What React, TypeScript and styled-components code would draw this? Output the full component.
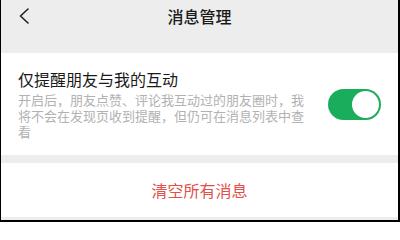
import React from "react";
import styled, { createGlobalStyle } from "styled-components";

const GlobalStyle = createGlobalStyle`
  html, body { margin: 0; padding: 0; background: #ffffff; }
  * { box-sizing: border-box; }
  body { font-family: "Noto Sans CJK SC", "Noto Sans", sans-serif; }
`;

const Frame = styled.div`
  width: 400px;
  height: 222px;
  background: #ededed;
  border-left: 1px solid #000;
  border-right: 2px solid #000;
  border-bottom: 2px solid #000;
  display: flex;
  flex-direction: column;
  overflow: hidden;
`;

const Header = styled.header`
  height: 53px;
  flex: none;
`;

const NavBar = styled.div`
  height: 31px;
  display: grid;
  grid-template-columns: 60px 1fr 60px;
  align-items: center;
`;

const BackButton = styled.div`
  padding-left: 17px;
  display: flex;
  align-items: center;
  padding-top: 1px;
`;

const Title = styled.h1`
  margin: 0;
  text-align: center;
  font-size: 16px;
  font-weight: 500;
  color: #1a1a1a;
  line-height: 22px;
`;

const Section = styled.section<{ $gapAfter?: number }>`
  background: #ffffff;
  margin-bottom: ${(p) => p.$gapAfter ?? 0}px;
`;

const SettingRow = styled.div`
  display: flex;
  align-items: center;
  padding: 16px 17px 15px 17px;
  gap: 20px;
`;

const TextCol = styled.div`
  flex: 1;
  min-width: 0;
`;

const SettingTitle = styled.div`
  font-size: 16px;
  line-height: 20px;
  color: #1a1a1a;
`;

const SettingDesc = styled.div`
  margin-top: 3px;
  font-size: 13px;
  line-height: 16px;
  color: #b2b2b2;
`;

const Toggle = styled.div<{ $on: boolean }>`
  flex: none;
  width: 53px;
  height: 31px;
  border-radius: 16px;
  background: ${(p) => (p.$on ? "#1aad5b" : "#e5e5e5")};
  display: flex;
  align-items: center;
  justify-content: ${(p) => (p.$on ? "flex-end" : "flex-start")};
  padding: 2px;
`;

const Knob = styled.div`
  width: 27px;
  height: 27px;
  border-radius: 50%;
  background: #ffffff;
`;

const ActionRow = styled.div`
  height: 54px;
  display: flex;
  align-items: center;
  justify-content: center;
  font-size: 16px;
  color: #e2504a;
`;

export default function App() {
  return (
    <>
      <GlobalStyle />
      <Frame>
        <Header>
          <NavBar>
            <BackButton>
              <svg width="12" height="16" viewBox="0 0 12 16" fill="none">
                <path d="M10 1 L2.5 8 L10 15" stroke="#222" strokeWidth="1.6" strokeLinecap="round" strokeLinejoin="round" />
              </svg>
            </BackButton>
            <Title>消息管理</Title>
            <div />
          </NavBar>
        </Header>
        <Section $gapAfter={8}>
          <SettingRow>
            <TextCol>
              <SettingTitle>仅提醒朋友与我的互动</SettingTitle>
              <SettingDesc>
                开启后，朋友点赞、评论我互动过的朋友圈时，我将不会在发现页收到提醒，但仍可在消息列表中查看
              </SettingDesc>
            </TextCol>
            <Toggle $on={true}>
              <Knob />
            </Toggle>
          </SettingRow>
        </Section>
        <Section>
          <ActionRow>清空所有消息</ActionRow>
        </Section>
      </Frame>
    </>
  );
}
